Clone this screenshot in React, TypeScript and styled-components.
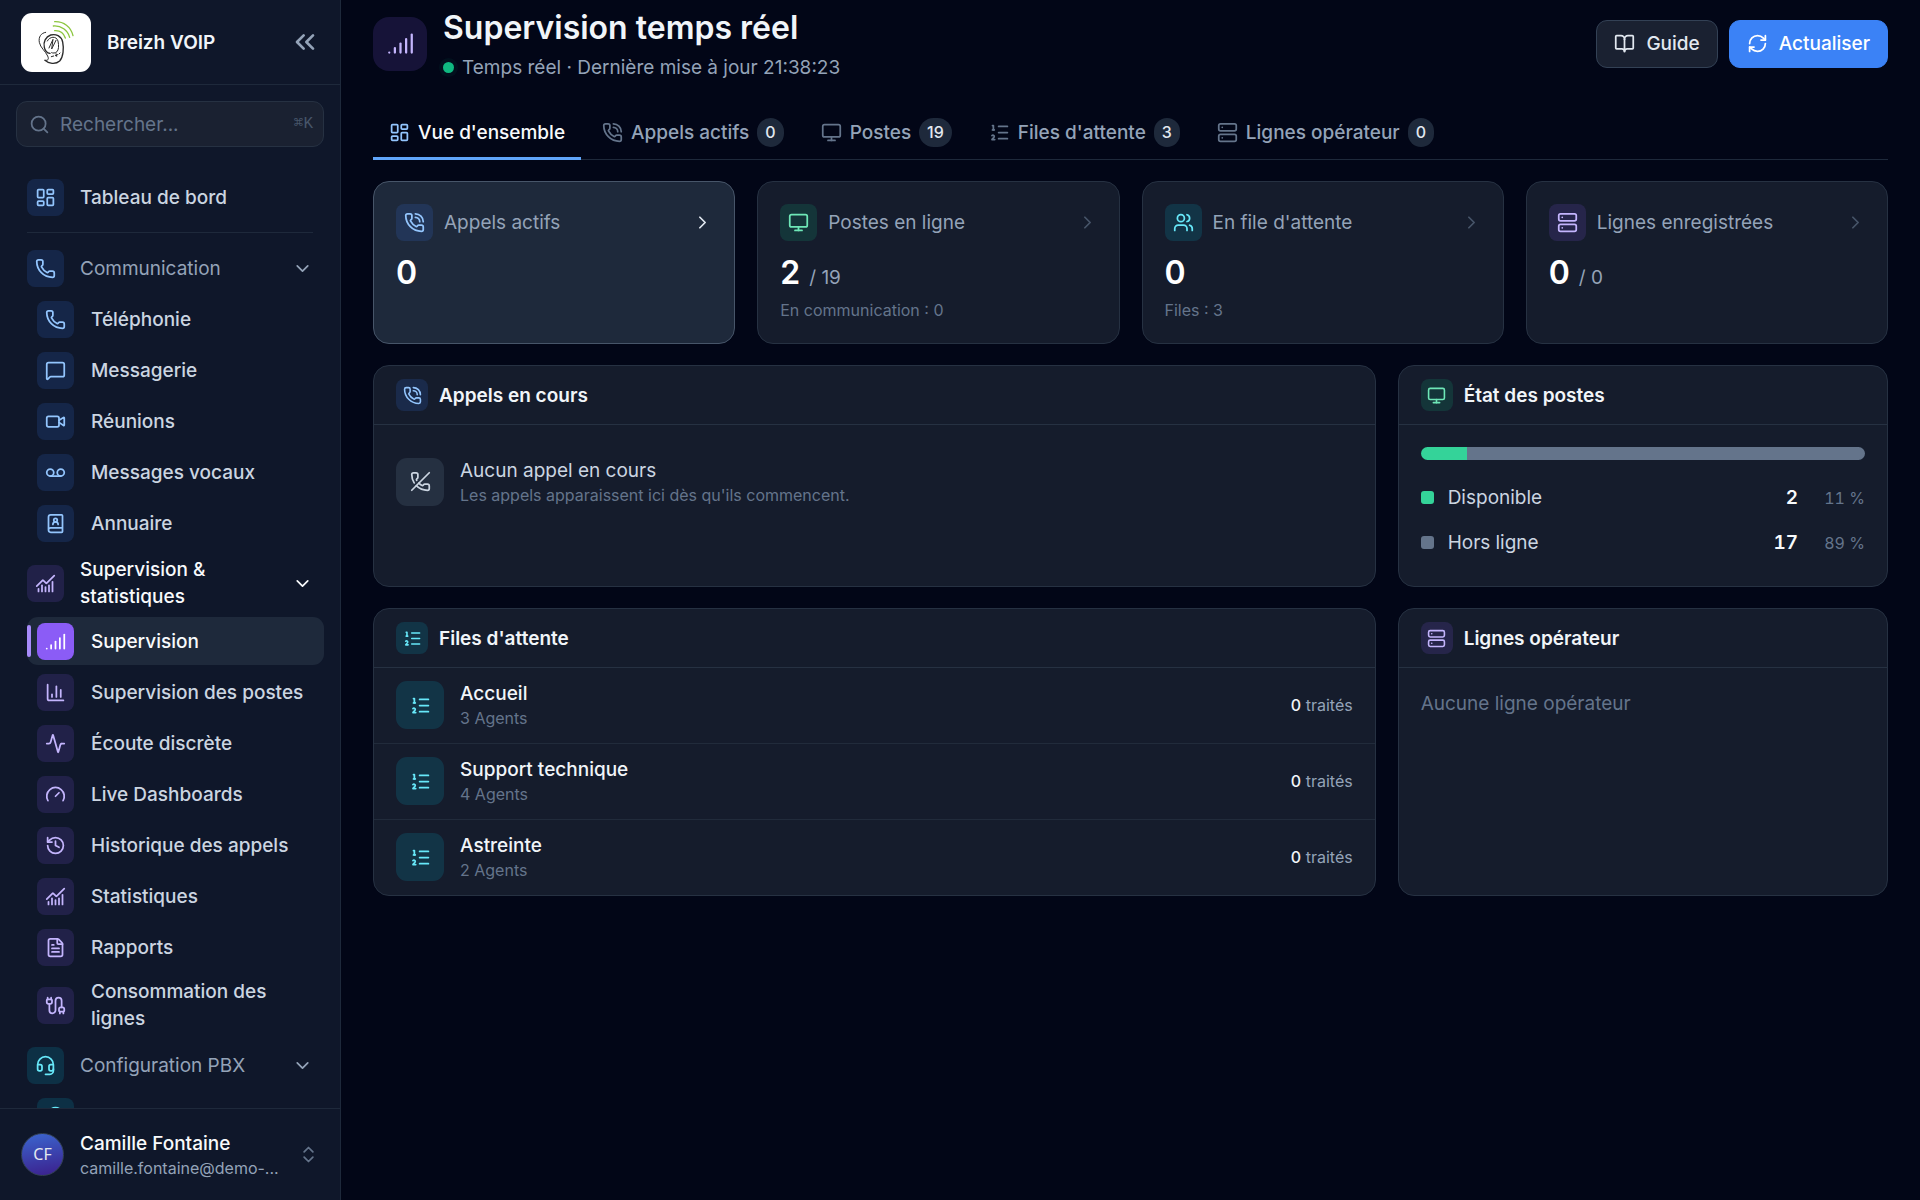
import React from "react";
import styled, { createGlobalStyle } from "styled-components";
import {
  Activity,
  BookOpen,
  BookUser,
  Cable,
  ChartColumn,
  ChartNoAxesCombined,
  ChevronDown,
  ChevronRight,
  ChevronsLeft,
  ChevronsUpDown,
  FileText,
  Gauge,
  Headset,
  History,
  LayoutDashboard,
  ListOrdered,
  MessageSquare,
  Monitor,
  Phone,
  PhoneCall,
  PhoneOff,
  RefreshCw,
  Search,
  Server,
  Signal,
  Users,
  Video,
  Voicemail,
  type LucideIcon,
} from "lucide-react";

const GlobalStyle = createGlobalStyle`
  *, *::before, *::after { box-sizing: border-box; }
  body {
    margin: 0;
    background: #020617;
    color: #f1f5f9;
    font-family: Inter, "Noto Sans", sans-serif;
    font-size: 19px;
    line-height: 27px;
  }
  button, input { font: inherit; color: inherit; }
  h1, h2, p, ul { margin: 0; padding: 0; }
  ul { list-style: none; }
`;

type Tone = "blue" | "violet" | "cyan" | "green" | "slate" | "active";

const tones: Record<Tone, { bg: string; fg: string }> = {
  blue: { bg: "rgba(59, 130, 246, 0.15)", fg: "#93c5fd" },
  violet: { bg: "rgba(139, 92, 246, 0.15)", fg: "#c4b5fd" },
  cyan: { bg: "rgba(6, 182, 212, 0.16)", fg: "#67e8f9" },
  green: { bg: "rgba(16, 185, 129, 0.16)", fg: "#6ee7b7" },
  slate: { bg: "#253041", fg: "#cbd5e1" },
  active: { bg: "#8b5cf6", fg: "#ffffff" },
};

const Shell = styled.div`
  display: grid;
  grid-template-columns: 341px minmax(0, 1fr);
  height: 100vh;
  overflow: hidden;
`;

const Sidebar = styled.aside`
  display: flex;
  flex-direction: column;
  min-height: 0;
  background: #0f172a;
  border-right: 1px solid #1e293b;
`;

const Brand = styled.div`
  display: flex;
  flex: none;
  align-items: center;
  gap: 16px;
  height: 85px;
  padding: 0 19px 0 21px;
  border-bottom: 1px solid #1e293b;
`;

const LogoBox = styled.div`
  width: 70px;
  height: 59px;
  border-radius: 11px;
  background: #ffffff;
`;

const BrandName = styled.span`
  flex: 1;
  font-weight: 600;
`;

const IconButton = styled.button`
  display: flex;
  padding: 0;
  border: 0;
  background: none;
  color: #94a3b8;
`;

const SearchBox = styled.label`
  display: flex;
  flex: none;
  align-items: center;
  gap: 10px;
  height: 46px;
  margin: 16px 16px 26px;
  padding: 0 10px 0 12px;
  border: 1px solid #263142;
  border-radius: 11px;
  background: #1a2131;
  color: #64748b;
`;

const SearchInput = styled.input`
  flex: 1;
  min-width: 0;
  padding: 0;
  border: 0;
  outline: 0;
  background: none;
  &::placeholder { color: #64748b; opacity: 1; }
`;

const Shortcut = styled.kbd`
  font-family: "Liberation Mono", "DejaVu Sans Mono", monospace;
  font-size: 16px;
  color: #475569;
`;

const Nav = styled.nav`
  flex: 1;
  min-height: 0;
  overflow: hidden;
  padding: 0 16px 0 27px;
`;

const NavDivider = styled.hr`
  height: 1px;
  margin: 11px 11px 11px 0;
  border: 0;
  background: #1e293b;
`;

const NavGroup = styled.ul`
  display: flex;
  flex-direction: column;
  gap: 3px;
  margin-bottom: 5px;
`;

const GroupToggle = styled.button<{ $current?: boolean }>`
  display: flex;
  align-items: center;
  gap: 16px;
  width: 100%;
  min-height: 48px;
  padding: 4px 11px 4px 0;
  border: 0;
  background: none;
  text-align: left;
  font-weight: ${(p) => (p.$current ? 500 : 400)};
  color: ${(p) => (p.$current ? "#f8fafc" : "#94a3b8")};
`;

const GroupLabel = styled.span`
  flex: 1;
`;

const NavLink = styled.a<{ $active?: boolean; $top?: boolean }>`
  position: relative;
  display: flex;
  align-items: center;
  gap: ${(p) => (p.$top ? 16 : 17)}px;
  min-height: 48px;
  padding: 4px 11px 4px ${(p) => (p.$top ? 0 : 10)}px;
  border-radius: 11px;
  text-decoration: none;
  font-weight: 500;
  color: ${(p) => (p.$active ? "#f8fafc" : "#cbd5e1")};
  background: ${(p) => (p.$active ? "#1e293b" : "transparent")};

  &::before {
    content: "";
    display: ${(p) => (p.$active ? "block" : "none")};
    position: absolute;
    left: 0;
    top: 8px;
    bottom: 8px;
    width: 4px;
    border-radius: 2px;
    background: #a78bfa;
  }
`;

const Tile = styled.span<{ $tone: Tone; $size: number }>`
  display: flex;
  flex: none;
  align-items: center;
  justify-content: center;
  width: ${(p) => p.$size}px;
  height: ${(p) => p.$size}px;
  border-radius: ${(p) => (p.$size > 50 ? 16 : p.$size > 40 ? 11 : 8)}px;
  background: ${(p) => tones[p.$tone].bg};
  color: ${(p) => tones[p.$tone].fg};
`;

const Account = styled.button`
  display: flex;
  flex: none;
  align-items: center;
  gap: 16px;
  height: 92px;
  padding: 0 21px;
  border: 0;
  border-top: 1px solid #1e293b;
  background: none;
  text-align: left;
  color: #64748b;
`;

const Avatar = styled.span`
  display: flex;
  flex: none;
  align-items: center;
  justify-content: center;
  width: 43px;
  height: 43px;
  border: 1px solid #334155;
  border-radius: 50%;
  background: linear-gradient(170deg, #3b66cf, #3b1f8c);
  font-family: "Noto Sans", sans-serif;
  font-size: 16px;
  color: #e2e8f0;
`;

const Stack = styled.span`
  display: flex;
  flex: 1;
  flex-direction: column;
  min-width: 0;
`;

const AccountName = styled.span`
  line-height: 26px;
  font-weight: 500;
  color: #f8fafc;
`;

const AccountMail = styled.span`
  white-space: nowrap;
  font-size: 16px;
  line-height: 22px;
  color: #94a3b8;
`;

const Main = styled.main`
  min-width: 0;
  overflow: hidden;
  padding: 6px 32px 32px;
`;

const PageHeader = styled.header`
  display: flex;
  align-items: center;
  gap: 16px;
  margin-bottom: 26px;
`;

const Heading = styled.div`
  flex: 1;
  padding-top: 2px;
`;

const Title = styled.h1`
  font-size: 32px;
  line-height: 40px;
  font-weight: 600;
`;

const Status = styled.p`
  display: flex;
  align-items: center;
  gap: 8px;
  margin-top: 6px;
  color: #94a3b8;
`;

const StatusDot = styled.span`
  width: 11px;
  height: 11px;
  border-radius: 50%;
  background: #10b981;
  box-shadow: 0 0 0 4px rgba(16, 185, 129, 0.06);
`;

const Actions = styled.div`
  display: flex;
  gap: 11px;
`;

const ActionButton = styled.button<{ $primary?: boolean }>`
  display: flex;
  align-items: center;
  gap: 11px;
  height: 48px;
  padding: 0 17px;
  border: 1px solid ${(p) => (p.$primary ? "#3b82f6" : "#334155")};
  border-radius: 11px;
  background: ${(p) => (p.$primary ? "#3b82f6" : "#1a2131")};
  font-weight: 500;
  color: ${(p) => (p.$primary ? "#ffffff" : "#e2e8f0")};
`;

const Tabs = styled.div`
  display: flex;
  gap: 5px;
  margin-bottom: 21px;
  box-shadow: inset 0 -1px #1e293b;
`;

const Tab = styled.button<{ $active?: boolean }>`
  display: flex;
  align-items: center;
  gap: 8px;
  height: 53px;
  padding: 0 16px;
  border: 0;
  border-bottom: 3px solid ${(p) => (p.$active ? "#60a5fa" : "transparent")};
  background: none;
  font-weight: 500;
  color: ${(p) => (p.$active ? "#f8fafc" : "#94a3b8")};

  svg { color: ${(p) => (p.$active ? "#93c5fd" : "#64748b")}; }
`;

const Count = styled.span`
  min-width: 26px;
  padding: 0 8px;
  border-radius: 15px;
  background: #1e293b;
  font-size: 16px;
  line-height: 29px;
  text-align: center;
  color: #e2e8f0;
`;

const Board = styled.div`
  display: grid;
  grid-template-columns: repeat(12, minmax(0, 1fr));
  gap: 21px 22px;
`;

const StatCard = styled.button<{ $selected?: boolean }>`
  grid-column: span 3;
  display: flex;
  flex-direction: column;
  align-items: stretch;
  min-height: 163px;
  padding: 22px 21px 20px 22px;
  border: 1px solid ${(p) => (p.$selected ? "#475569" : "#263142")};
  border-radius: 16px;
  background: ${(p) => (p.$selected ? "#1e293b" : "#151c2c")};
  text-align: left;
`;

const StatHead = styled.span<{ $selected?: boolean }>`
  display: flex;
  align-items: center;
  gap: 11px;
  color: #94a3b8;

  > svg { color: ${(p) => (p.$selected ? "#e2e8f0" : "#475569")}; }
`;

const StatValue = styled.span`
  margin-top: 12px;
  font-size: 32px;
  line-height: 40px;
  font-weight: 600;
  color: #ffffff;
`;

const StatTotal = styled.span`
  margin-left: 9px;
  font-size: 19px;
  line-height: 20px;
  font-weight: 400;
  color: #94a3b8;
`;

const Small = styled.span`
  font-size: 16px;
  line-height: 22px;
  color: #64748b;
`;

const StatNote = styled(Small)`
  margin-top: 6px;
`;

const Panel = styled.section<{ $span: number; $minHeight: number }>`
  grid-column: span ${(p) => p.$span};
  min-height: ${(p) => p.$minHeight}px;
  border: 1px solid #263142;
  border-radius: 16px;
  background: #151c2c;
`;

const PanelHead = styled.header`
  display: flex;
  align-items: center;
  gap: 11px;
  height: 59px;
  padding: 0 22px;
  border-bottom: 1px solid #263142;
`;

const PanelTitle = styled.h2`
  font-size: 19px;
  font-weight: 600;
`;

const PanelBody = styled.div`
  padding: 22px;
`;

const Empty = styled.div`
  display: flex;
  align-items: center;
  gap: 16px;
  padding: 32px 22px;
  color: #cbd5e1;
`;

const Muted = styled.p`
  color: #64748b;
`;

const Meter = styled.div`
  display: flex;
  height: 13px;
  overflow: hidden;
  border-radius: 7px;
`;

const MeterPart = styled.span<{ $color: string }>`
  background: ${(p) => p.$color};
`;

const Legend = styled.ul`
  display: flex;
  flex-direction: column;
  gap: 18px;
  margin-top: 24px;
`;

const LegendRow = styled.li`
  display: grid;
  grid-template-columns: 13px 1fr auto 45px;
  align-items: center;
  column-gap: 14px;
  color: #cbd5e1;
  font-variant-numeric: tabular-nums;

  > :last-child { text-align: right; }
`;

const Swatch = styled.span<{ $color: string }>`
  height: 13px;
  border-radius: 3px;
  background: ${(p) => p.$color};
`;

const LegendValue = styled.span`
  margin-right: 8px;
  font-weight: 600;
  color: #f8fafc;
`;

const QueueRow = styled.li`
  display: flex;
  align-items: center;
  gap: 16px;
  padding: 13px 22px 14px;

  &:not(:last-child) { border-bottom: 1px solid #212b3b; }
`;

const QueueName = styled.span`
  line-height: 26px;
  font-weight: 500;
`;

const Handled = styled.span`
  font-size: 16px;
  color: #94a3b8;
`;

const HandledCount = styled.span`
  font-weight: 500;
  color: #f1f5f9;
`;

const STROKE = 2;

function IconTile({ icon: Icon, tone, size = 37, glyph = 21 }: { icon: LucideIcon; tone: Tone; size?: number; glyph?: number }) {
  return (
    <Tile $tone={tone} $size={size}>
      <Icon size={glyph} strokeWidth={STROKE} aria-hidden />
    </Tile>
  );
}

function Logo() {
  return (
    <LogoBox>
      <svg width="70" height="59" viewBox="0 0 210 177" fill="none" strokeLinecap="round" role="img" aria-label="Breizh VOIP">
        <g stroke="#8cc63f" strokeWidth="4">
          <path d="M101 26 C128 25 150 41 156 68" />
          <path d="M97 39 C121 37 140 52 146 73" />
          <path d="M101 53 C116 52 128 60 133 75" />
        </g>
        <g stroke="#2b2b2b" strokeWidth="3" strokeLinejoin="round">
          <path d="M74 58 C60 60 52 72 55 88 C58 104 73 114 80 129 C85 140 80 143 72 142" />
          <path strokeWidth="4" d="M72 142 C82 152 104 155 116 144 C127 132 129 106 125 87 C121 68 104 62 89 66 C74 71 66 88 70 103 C72 114 78 120 87 121" />
          <path d="M79 84 C86 70 106 68 111 84 C114 99 113 110 108 116 C102 121 96 121 92 119" />
          <path d="M84 105 L96 79 L92 108 L105 82" />
          <path d="M91 131 L98 129 M103 128 L110 125 M105 122 L107 130 M114 123 L117 120" />
        </g>
      </svg>
    </LogoBox>
  );
}

type Item = { label: string; icon: LucideIcon; active?: boolean };
type Group = { label: string; icon: LucideIcon; tone: Tone; current?: boolean; items: Item[] };

const groups: Group[] = [
  {
    label: "Communication",
    icon: Phone,
    tone: "blue",
    items: [
      { label: "Téléphonie", icon: Phone },
      { label: "Messagerie", icon: MessageSquare },
      { label: "Réunions", icon: Video },
      { label: "Messages vocaux", icon: Voicemail },
      { label: "Annuaire", icon: BookUser },
    ],
  },
  {
    label: "Supervision & statistiques",
    icon: ChartNoAxesCombined,
    tone: "violet",
    current: true,
    items: [
      { label: "Supervision", icon: Signal, active: true },
      { label: "Supervision des postes", icon: ChartColumn },
      { label: "Écoute discrète", icon: Activity },
      { label: "Live Dashboards", icon: Gauge },
      { label: "Historique des appels", icon: History },
      { label: "Statistiques", icon: ChartNoAxesCombined },
      { label: "Rapports", icon: FileText },
      { label: "Consommation des lignes", icon: Cable },
    ],
  },
  {
    label: "Configuration PBX",
    icon: Headset,
    tone: "cyan",
    items: [{ label: "", icon: Headset }],
  },
];

const tabs: { label: string; icon: LucideIcon; count?: number }[] = [
  { label: "Vue d'ensemble", icon: LayoutDashboard },
  { label: "Appels actifs", icon: PhoneCall, count: 0 },
  { label: "Postes", icon: Monitor, count: 19 },
  { label: "Files d'attente", icon: ListOrdered, count: 3 },
  { label: "Lignes opérateur", icon: Server, count: 0 },
];

const stats: { label: string; icon: LucideIcon; tone: Tone; value: number; total?: number; note?: string }[] = [
  { label: "Appels actifs", icon: PhoneCall, tone: "blue", value: 0 },
  { label: "Postes en ligne", icon: Monitor, tone: "green", value: 2, total: 19, note: "En communication : 0" },
  { label: "En file d'attente", icon: Users, tone: "cyan", value: 0, note: "Files : 3" },
  { label: "Lignes enregistrées", icon: Server, tone: "violet", value: 0, total: 0 },
];

const states = [
  { label: "Disponible", count: 2, color: "#34d399" },
  { label: "Hors ligne", count: 17, color: "#64748b" },
];
const stateTotal = states.reduce((sum, s) => sum + s.count, 0);

const queues = [
  { name: "Accueil", agents: 3 },
  { name: "Support technique", agents: 4 },
  { name: "Astreinte", agents: 2 },
];

function PanelHeader({ icon, tone, title }: { icon: LucideIcon; tone: Tone; title: string }) {
  return (
    <PanelHead>
      <IconTile icon={icon} tone={tone} size={32} glyph={19} />
      <PanelTitle>{title}</PanelTitle>
    </PanelHead>
  );
}

export default function App() {
  return (
    <>
      <GlobalStyle />
      <Shell>
        <Sidebar>
          <Brand>
            <Logo />
            <BrandName>Breizh VOIP</BrandName>
            <IconButton aria-label="Réduire le menu">
              <ChevronsLeft size={32} strokeWidth={STROKE} />
            </IconButton>
          </Brand>
          <SearchBox>
            <Search size={21} strokeWidth={STROKE} aria-hidden />
            <SearchInput type="text" placeholder="Rechercher..." aria-label="Rechercher" />
            <Shortcut>⌘K</Shortcut>
          </SearchBox>
          <Nav>
            <NavLink href="#" $top>
              <IconTile icon={LayoutDashboard} tone="blue" />
              Tableau de bord
            </NavLink>
            <NavDivider />
            {groups.map((group) => (
              <NavGroup key={group.label}>
                <li>
                  <GroupToggle $current={group.current} aria-expanded>
                    <IconTile icon={group.icon} tone={group.tone} />
                    <GroupLabel>{group.label}</GroupLabel>
                    <ChevronDown size={21} strokeWidth={STROKE} aria-hidden />
                  </GroupToggle>
                </li>
                {group.items.map((item) => (
                  <li key={item.label}>
                    <NavLink href="#" $active={item.active}>
                      <IconTile icon={item.icon} tone={item.active ? "active" : group.tone} />
                      {item.label}
                    </NavLink>
                  </li>
                ))}
              </NavGroup>
            ))}
          </Nav>
          <Account>
            <Avatar>CF</Avatar>
            <Stack>
              <AccountName>Camille Fontaine</AccountName>
              <AccountMail>camille.fontaine@demo-...</AccountMail>
            </Stack>
            <ChevronsUpDown size={21} strokeWidth={STROKE} aria-hidden />
          </Account>
        </Sidebar>

        <Main>
          <PageHeader>
            <IconTile icon={Signal} tone="violet" size={54} glyph={27} />
            <Heading>
              <Title>Supervision temps réel</Title>
              <Status>
                <StatusDot />
                Temps réel · Dernière mise à jour 21:38:23
              </Status>
            </Heading>
            <Actions>
              <ActionButton>
                <BookOpen size={21} strokeWidth={STROKE} aria-hidden />
                Guide
              </ActionButton>
              <ActionButton $primary>
                <RefreshCw size={21} strokeWidth={STROKE} aria-hidden />
                Actualiser
              </ActionButton>
            </Actions>
          </PageHeader>

          <Tabs role="tablist">
            {tabs.map(({ label, icon: Icon, count }, i) => (
              <Tab key={label} role="tab" aria-selected={i === 0} $active={i === 0}>
                <Icon size={21} strokeWidth={STROKE} aria-hidden />
                {label}
                {count !== undefined && <Count>{count}</Count>}
              </Tab>
            ))}
          </Tabs>

          <Board>
            {stats.map((s, i) => (
              <StatCard key={s.label} $selected={i === 0}>
                <StatHead $selected={i === 0}>
                  <IconTile icon={s.icon} tone={s.tone} />
                  <GroupLabel>{s.label}</GroupLabel>
                  <ChevronRight size={21} strokeWidth={STROKE} aria-hidden />
                </StatHead>
                <StatValue>
                  {s.value}
                  {s.total !== undefined && <StatTotal>/ {s.total}</StatTotal>}
                </StatValue>
                {s.note && <StatNote>{s.note}</StatNote>}
              </StatCard>
            ))}

            <Panel $span={8} $minHeight={222}>
              <PanelHeader icon={PhoneCall} tone="blue" title="Appels en cours" />
              <Empty>
                <IconTile icon={PhoneOff} tone="slate" size={48} />
                <Stack>
                  Aucun appel en cours
                  <Small>Les appels apparaissent ici dès qu'ils commencent.</Small>
                </Stack>
              </Empty>
            </Panel>

            <Panel $span={4} $minHeight={222}>
              <PanelHeader icon={Monitor} tone="green" title="État des postes" />
              <PanelBody>
                <Meter>
                  {states.map((s) => (
                    <MeterPart key={s.label} $color={s.color} style={{ width: `${(s.count / stateTotal) * 100}%` }} />
                  ))}
                </Meter>
                <Legend>
                  {states.map((s) => (
                    <LegendRow key={s.label}>
                      <Swatch $color={s.color} />
                      <span>{s.label}</span>
                      <LegendValue>{s.count}</LegendValue>
                      <Small>{Math.round((s.count / stateTotal) * 100)} %</Small>
                    </LegendRow>
                  ))}
                </Legend>
              </PanelBody>
            </Panel>

            <Panel $span={8} $minHeight={287}>
              <PanelHeader icon={ListOrdered} tone="cyan" title="Files d'attente" />
              <ul>
                {queues.map((q) => (
                  <QueueRow key={q.name}>
                    <IconTile icon={ListOrdered} tone="cyan" size={48} />
                    <Stack>
                      <QueueName>{q.name}</QueueName>
                      <Small>{q.agents} Agents</Small>
                    </Stack>
                    <Handled>
                      <HandledCount>0</HandledCount> traités
                    </Handled>
                  </QueueRow>
                ))}
              </ul>
            </Panel>

            <Panel $span={4} $minHeight={287}>
              <PanelHeader icon={Server} tone="violet" title="Lignes opérateur" />
              <PanelBody>
                <Muted>Aucune ligne opérateur</Muted>
              </PanelBody>
            </Panel>
          </Board>
        </Main>
      </Shell>
    </>
  );
}
